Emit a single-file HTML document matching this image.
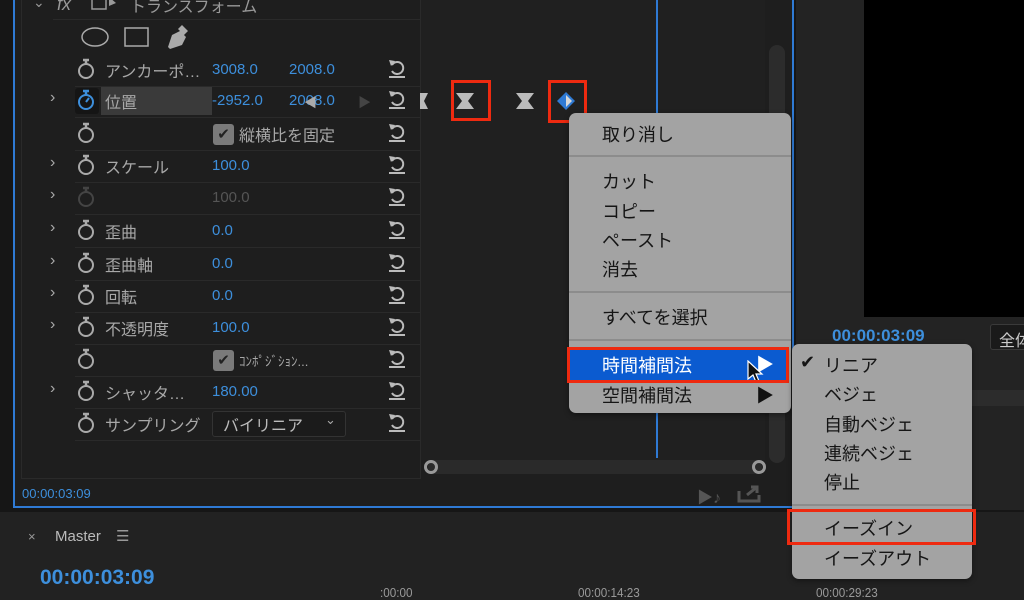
<!DOCTYPE html>
<html><head><meta charset="utf-8">
<style>
*{margin:0;padding:0;box-sizing:border-box}
body{width:1024px;height:600px;overflow:hidden;background:#161616;position:relative;font-family:"Liberation Sans","Noto Sans CJK JP",sans-serif;color:#b4b4b4}
.a{position:absolute}
.lbl{position:absolute;font-size:16px;color:#a8a8a8;white-space:nowrap}
.val{position:absolute;font-size:15px;color:#3d8fdc;white-space:nowrap}
.sep{position:absolute;left:75px;width:345px;height:1px;background:#2a2a2a}
.mi{position:absolute;font-size:18px;color:#151515;white-space:nowrap}
.ms{position:absolute;height:2px;background:#8c8c8c}
.red{position:absolute;border:3px solid #ee2a10}
</style></head><body>
<div class="a" style="left:13px;top:0;width:781px;height:508px;background:#1e1e1e;border-left:2px solid #2f7ad4;border-right:2px solid #2f7ad4;border-bottom:2px solid #2f7ad4"></div>
<div class="a" style="left:21px;top:0;width:1px;height:478px;background:#2a2a2a"></div>
<div class="a" style="left:420px;top:0;width:345px;height:460px;background:#202020"></div>
<div class="a" style="left:21px;top:478px;width:400px;height:1px;background:#2a2a2a"></div>
<div class="a" style="left:420px;top:0;width:1px;height:478px;background:#2a2a2a"></div>
<div class="a" style="left:656px;top:0;width:2px;height:458px;background:#2f7ad4"></div>
<div class="a" style="left:769px;top:45px;width:16px;height:418px;background:#2c2c2c;border-radius:8px"></div>
<div class="a" style="left:428px;top:460px;width:334px;height:14px;background:#2a2a2a;border-radius:7px"></div>
<div class="a" style="left:424px;top:460px;width:14px;height:14px;border:3px solid #999;border-radius:50%"></div>
<div class="a" style="left:752px;top:460px;width:14px;height:14px;border:3px solid #999;border-radius:50%"></div>
<div class="a" style="left:22px;top:486px;font-size:13px;color:#3d8fdc">00:00:03:09</div>
<div class="a" style="left:697px;top:484px;font-size:16px;color:#555">▶♪</div>
<svg class="a" style="left:737px;top:483px" width="24" height="20"><path d="M2 8v10h20v-6M10 12l10-8M14 4h6v6" stroke="#555" stroke-width="3" fill="none"/></svg>

<div class="a" style="left:33px;top:-6px;font-size:14px;color:#999">⌄</div>
<div class="a" style="left:57px;top:-6px;font-size:18px;font-style:italic;color:#999">fx</div>
<svg class="a" style="left:90px;top:-3px" width="30" height="16"><rect x="2" y="0" width="14" height="12" stroke="#999" fill="none" stroke-width="1.5"/><path d="M19 0l7 6-7 3z" fill="#999"/></svg>
<div class="lbl" style="left:130px;top:-7px;font-size:16px;color:#999">トランスフォーム</div>
<div class="sep" style="top:19px;left:53px;width:367px"></div>
<svg class="a" style="left:80px;top:25px" width="120" height="24"><ellipse cx="15" cy="12" rx="13" ry="9" stroke="#aaa" stroke-width="1.5" fill="none"/><rect x="45" y="3" width="23" height="18" stroke="#aaa" stroke-width="1.5" fill="none"/><path d="M88 22l4-12 8-4 6 6-4 8-12 4zM98 4l4-4 6 6-4 4z" fill="#aaa"/></svg>

<div id="rows"></div>
<script>
const rows=[
[70,0,"アンカーポ…","3008.0","2008.0"],
[101,1,"位置","-2952.0","2008.0"],
[134,0,"","","",1],
[166,1,"スケール","100.0",""],
[198,1,"","100.0","",0,1],
[231,1,"歪曲","0.0",""],
[264,1,"歪曲軸","0.0",""],
[296,1,"回転","0.0",""],
[328,1,"不透明度","100.0",""],
[360,0,"","","",2],
[392,1,"シャッタ…","180.00",""],
[424,0,"サンプリング","","",3]];
let h="";
rows.forEach(r=>{
 const y=r[0];
 if(r[1])h+=`<div class="lbl" style="left:50px;top:${y-12}px;color:#aaa">›</div>`;
 const sc=r[6]?"#444":(y==101?"#3d8fdc":"#aaa");
 if(y==101)h+=`<div class="a" style="left:75px;top:${y-13}px;width:24px;height:26px;background:#151515;border-radius:3px"></div><div class="a" style="left:101px;top:${y-14}px;width:111px;height:28px;background:#3a3a3a"></div>`;
 h+=`<svg class="a" style="left:77px;top:${y-12}px" width="20" height="22"><circle cx="9" cy="13" r="7" stroke="${sc}" stroke-width="2" fill="none"/><path d="M6 2h6M9 2v4" stroke="${sc}" stroke-width="2.5"/>${y==101?'<path d="M9 13l3-4" stroke="#3d8fdc" stroke-width="2"/>':''}</svg>`;
 if(r[2])h+=`<div class="lbl" style="left:105px;top:${y-12}px">${r[2]}</div>`;
 if(r[3])h+=`<div class="val" style="left:212px;top:${y-9}px;${r[6]?'color:#555':''}">${r[3]}</div>`;
 if(r[4])h+=`<div class="val" style="left:289px;top:${y-9}px">${r[4]}</div>`;
 if(r[5]==1||r[5]==2)h+=`<div class="a" style="left:213px;top:${y-10}px;width:21px;height:21px;background:#7a7a7a;border-radius:3px;color:#222;font-size:15px;text-align:center;line-height:21px">✔</div>`;
 if(r[5]==1)h+=`<div class="lbl" style="left:239px;top:${y-12}px">縦横比を固定</div>`;
 if(r[5]==2)h+=`<div class="lbl" style="left:239px;top:${y-9}px;font-size:13px">ｺﾝﾎﾟｼﾞｼｮﾝ...</div>`;
 if(r[5]==3)h+=`<div class="a" style="left:212px;top:${y-13}px;width:134px;height:26px;border:1px solid #333;border-radius:3px;background:#1b1b1b"></div><div class="lbl" style="left:223px;top:${y-12}px;color:#bbb">バイリニア</div><div class="lbl" style="left:325px;top:${y-12}px;font-size:13px">⌄</div>`;
 h+=`<svg class="a" style="left:386px;top:${y-13}px" width="22" height="22"><path d="M6 8a6 6 0 1 1 0 6" stroke="#bbb" stroke-width="2" fill="none"/><path d="M3 3l6 1-4 5z" fill="#bbb"/><path d="M3 20h16" stroke="#bbb" stroke-width="2"/></svg>`;
 h+=`<div class="sep" style="top:${y+16}px"></div>`;
});
document.getElementById("rows").innerHTML=h;
</script>
<div class="a" style="left:304px;top:92px;font-size:13px;color:#aaa">◀</div>
<div class="a" style="left:358px;top:92px;font-size:13px;color:#444">▶</div>
<svg class="a" style="left:418px;top:90px" width="180" height="22"><path d="M2 3h8l-4 8 4 8H2z" fill="#bbb"/><path d="M38 3h18l-6 8 6 8H38l6-8z" fill="#bbb"/><path d="M98 3h18l-6 8 6 8H98l6-8z" fill="#bbb"/><path d="M148 2l9 9-9 9-9-9z" fill="#2f7ad4"/><path d="M148 5l6 6-6 6z" fill="#d8d8d8"/></svg>
<div class="red" style="left:451px;top:80px;width:40px;height:41px"></div>
<div class="red" style="left:548px;top:80px;width:39px;height:43px"></div>

<div class="a" style="left:796px;top:0;width:228px;height:510px;background:#232323"></div>
<div class="a" style="left:864px;top:0;width:160px;height:317px;background:#000"></div>
<div class="a" style="left:832px;top:326px;font-size:17px;font-weight:bold;color:#3d8fdc">00:00:03:09</div>
<div class="a" style="left:990px;top:324px;width:50px;height:26px;border:1px solid #3a3a3a;border-radius:3px;background:#1a1a1a;color:#ccc;font-size:16px;padding:2px 8px">全体</div>
<div class="a" style="left:796px;top:390px;width:228px;height:16px;background:#2c2c2c"></div>

<div class="a" style="left:0;top:512px;width:1024px;height:88px;background:#222"></div>
<div class="a" style="left:28px;top:529px;font-size:13px;color:#999">×</div>
<div class="a" style="left:55px;top:528px;font-size:15px;color:#bbb">Master</div>
<div class="a" style="left:116px;top:527px;font-size:15px;color:#999">☰</div>
<div class="a" style="left:40px;top:566px;font-size:21px;font-weight:bold;color:#3d8fdc">00:00:03:09</div>
<div class="a" style="left:380px;top:585px;font-size:13px;color:#999;transform:scaleX(.9);transform-origin:left">:00:00</div>
<div class="a" style="left:578px;top:585px;font-size:13px;color:#999;transform:scaleX(.9);transform-origin:left">00:00:14:23</div>
<div class="a" style="left:816px;top:585px;font-size:13px;color:#999;transform:scaleX(.9);transform-origin:left">00:00:29:23</div>

<div class="a" style="left:569px;top:113px;width:222px;height:300px;background:#a3a3a3;border-radius:7px;box-shadow:0 2px 6px rgba(0,0,0,.4)"></div>
<div class="mi" style="left:602px;top:121px">取り消し</div>
<div class="ms" style="left:569px;top:155px;width:222px"></div>
<div class="mi" style="left:602px;top:168px">カット</div>
<div class="mi" style="left:602px;top:198px">コピー</div>
<div class="mi" style="left:602px;top:227px">ペースト</div>
<div class="mi" style="left:602px;top:256px">消去</div>
<div class="ms" style="left:569px;top:291px;width:222px"></div>
<div class="mi" style="left:602px;top:304px">すべてを選択</div>
<div class="ms" style="left:569px;top:339px;width:222px"></div>
<div class="a" style="left:569px;top:349px;width:219px;height:32px;background:#0b5bd0"></div>
<div class="mi" style="left:602px;top:352px;color:#fff">時間補間法</div>
<div class="a" style="left:756px;top:351px;font-size:18px;color:#fff">▶</div>
<svg class="a" style="left:746px;top:360px" width="18" height="24"><path d="M2 1v18l5-4 3 7 3-1-3-7h6z" fill="#111" stroke="#fff" stroke-width="1.2"/></svg>
<div class="mi" style="left:602px;top:382px">空間補間法</div>
<div class="a" style="left:756px;top:382px;font-size:18px;color:#111">▶</div>
<div class="red" style="left:567px;top:347px;width:222px;height:36px"></div>

<div class="a" style="left:792px;top:344px;width:180px;height:235px;background:#a3a3a3;border-radius:7px;box-shadow:0 2px 6px rgba(0,0,0,.4)"></div>
<div class="mi" style="left:800px;top:352px">✔</div>
<div class="mi" style="left:824px;top:352px">リニア</div>
<div class="mi" style="left:824px;top:381px">ベジェ</div>
<div class="mi" style="left:824px;top:411px">自動ベジェ</div>
<div class="mi" style="left:824px;top:440px">連続ベジェ</div>
<div class="mi" style="left:824px;top:469px">停止</div>
<div class="ms" style="left:792px;top:504px;width:180px"></div>
<div class="mi" style="left:824px;top:515px">イーズイン</div>
<div class="mi" style="left:824px;top:545px">イーズアウト</div>
<div class="red" style="left:787px;top:509px;width:189px;height:36px"></div>
</body></html>
